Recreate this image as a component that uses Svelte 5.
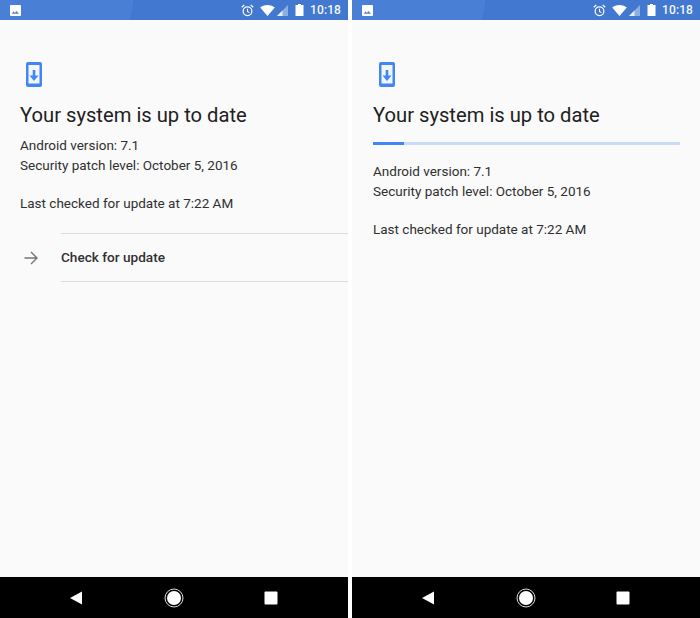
<script>
  const panels = [{ checking: false }, { checking: true }];
</script>

<div class="screens">
  {#each panels as panel}
    <section class="phone">
      <header class="status">
        <svg class="pic" viewBox="0 0 12 12" width="11" height="11">
          <path fill="#fff" d="M1.2 0h9.6C11.5 0 12 .5 12 1.2v9.6c0 .7-.5 1.2-1.2 1.2H1.2C.5 12 0 11.500 0 10.800V1.200C0 .5.500 0 1.200 0z" />
          <path fill="#4a7fd6" d="M2 9.500l2-2.600 1.400 1.700 1.500-2 3 2.900z" />
        </svg>
        <span class="spacer"></span>
        <svg class="alarm" viewBox="0 0 14 14" width="13" height="13">
          <circle cx="7" cy="7.800" r="4.700" fill="none" stroke="#fff" stroke-width="1.300" />
          <path d="M7 5v3l2 1.300" fill="none" stroke="#fff" stroke-width="1.100" />
          <path d="M.8 3.500 3.600 1.100M13.200 3.500 10.400 1.100" stroke="#fff" stroke-width="1.300" />
        </svg>
        <svg class="wifi" viewBox="0 0 16 12" width="15" height="11">
          <path fill="#fff" d="M8 12 0 2.800C2 1 4.800 0 8 0s6 1 8 2.800z" />
        </svg>
        <svg class="signal" viewBox="0 0 12 12" width="11" height="11">
          <path fill="#fff" fill-opacity=".4" d="M12 0v12H0z" />
          <path fill="#fff" fill-opacity=".8" d="M6 6v6H0z" />
        </svg>
        <svg class="battery" viewBox="0 0 8 12" width="9" height="12">
          <path fill="#fff" d="M2.500 0h3v1H8v11H0V1h2.500z" />
        </svg>
        <span class="time">10:18</span>
      </header>

      <main class="content" class:checking={panel.checking}>
        <svg class="update-icon" viewBox="0 0 16 25" width="16" height="25">
          <rect width="16" height="25" rx="2" fill="#4285f4" />
          <rect x="2.500" y="3" width="11" height="18.500" fill="#f2f6fd" />
          <path d="M8 8v6" stroke="#4285f4" stroke-width="2.600" />
          <path d="M3.500 13.500h9L8 19z" fill="#4285f4" />
        </svg>
        <h1>Your system is up to date</h1>
        {#if panel.checking}
          <div class="progress"><div class="bar"></div></div>
        {/if}
        <p class="versions">Android version: 7.1<br />Security patch level: October 5, 2016</p>
        <p class="checked">Last checked for update at 7:22 AM</p>

        {#if !panel.checking}
          <div class="action">
            <svg viewBox="0 0 15 14" width="15" height="14">
              <path d="M.5 7h12.500M7 1 13 7l-6 6" fill="none" stroke="#757575" stroke-width="1.400" />
            </svg>
            <span>Check for update</span>
          </div>
        {/if}
      </main>

      <nav class="navbar">
        <svg viewBox="0 0 14 14" width="14" height="14">
          <path d="M12 .5v13L0 7z" fill="#fff" />
        </svg>
        <svg viewBox="0 0 20 20" width="20" height="20">
          <circle cx="10" cy="10" r="9" fill="none" stroke="#ddd" stroke-width="1" />
          <circle cx="10" cy="10" r="7" fill="#fff" />
        </svg>
        <svg viewBox="0 0 14 14" width="14" height="14">
          <rect x=".5" y=".5" width="13" height="13" rx="1" fill="#fff" />
        </svg>
      </nav>
    </section>
  {/each}
</div>

<style>
  :global(body) {
    background: #fff;
  }

  .screens {
    display: flex;
    justify-content: space-between;
    width: 700px;
    height: 618px;
    font-family: Roboto, "Liberation Sans", sans-serif;
  }

  .phone {
    width: 348px;
    height: 618px;
    display: flex;
    flex-direction: column;
    background: #fafafa;
  }

  .status {
    height: 20px;
    flex: none;
    display: flex;
    align-items: center;
    padding: 0 7px 0 10px;
    background: linear-gradient(100deg, #4a7fd6 0 38%, #4278d0 38% 100%);
    color: #fff;
  }

  .spacer {
    flex: 1;
  }

  .alarm {
    margin-right: 6px;
  }

  .signal {
    margin-left: 2px;
    margin-right: 7px;
  }

  .battery {
    margin-right: 6px;
  }

  .time {
    font-size: 12px;
    font-weight: 500;
    letter-spacing: 0.1px;
    opacity: 0.95;
  }

  .content {
    flex: 1;
    display: flex;
    flex-direction: column;
    padding: 42px 0 0 20px;
    color: #303030;
  }

  .content.checking {
    padding-left: 21px;
  }

  .update-icon {
    margin: 0 0 0 6px;
  }

  h1 {
    margin: 15px 0 0;
    font-size: 20.200px;
    line-height: 26px;
    font-weight: 400;
    color: #212121;
  }

  .progress {
    height: 3px;
    margin: 14px 20px 0 0;
    background: #c9daf6;
  }

  .bar {
    width: 31px;
    height: 3px;
    background: #4285f4;
  }

  p {
    margin: 0;
    font-size: 13.500px;
    line-height: 20px;
  }

  .versions {
    margin-top: 7px;
  }

  .checking .versions {
    margin-top: 16px;
  }

  .checked {
    margin-top: 18px;
  }

  .action {
    display: flex;
    align-items: center;
    margin: 20px 0 0 -20px;
    padding-left: 24px;
    gap: 22px;
  }

  .action span {
    flex: 1;
    height: 47px;
    line-height: 47px;
    font-size: 13.600px;
    font-weight: 500;
    border-top: 1px solid #dcdcdc;
    border-bottom: 1px solid #dcdcdc;
  }

  .navbar {
    height: 41px;
    flex: none;
    display: flex;
    align-items: center;
    justify-content: space-between;
    padding: 0 70px;
    background: #000;
  }
</style>
